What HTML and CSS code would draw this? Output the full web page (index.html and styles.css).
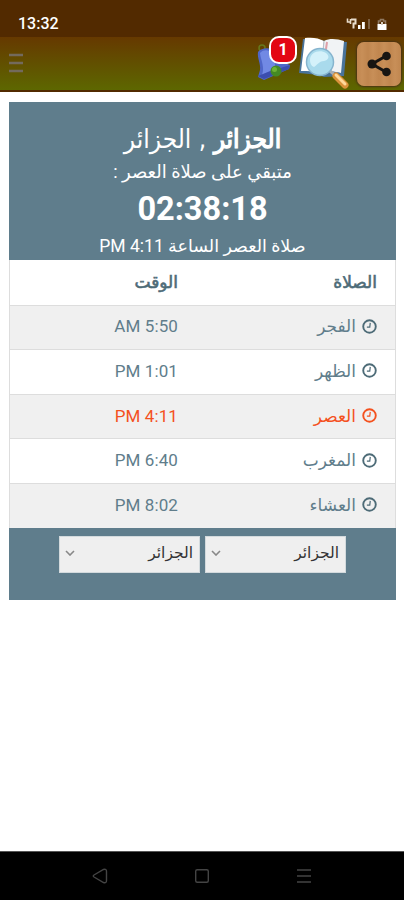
FILE: index.html
```html
<!DOCTYPE html>
<html lang="ar" dir="rtl">
<head>
<meta charset="utf-8">
<title>أوقات الصلاة</title>
<link rel="stylesheet" href="styles.css">
</head>
<body>
<svg width="0" height="0" class="defs">
	<symbol id="clock" viewBox="0 0 16 16">
		<circle cx="8" cy="8" r="6.700" fill="none" stroke="currentColor" stroke-width="2"/>
		<path d="M8.800 4.200L8.300 8.600H5.200" fill="none" stroke="currentColor" stroke-width="1.300"/>
	</symbol>
</svg>

<div class="status" dir="ltr">
	<span class="status-time">13:32</span>
	<svg class="status-icons" width="42" height="16" viewBox="0 0 42 16">
		<path d="M1.500 1.500v3.500h3.500M4.500 2v5" fill="none" stroke="#e8dccb" stroke-width="1.600"/>
		<path d="M5 2.500h4.500v4H7.500v5" fill="none" stroke="#e8dccb" stroke-width="2"/>
		<path d="M12 8h2.500v4H12zM16 5h2.800v7H16z" fill="#fff"/>
		<path d="M22 2h2v10h-2z" fill="#7d6043"/>
		<path d="M32.500 7V4h2V2.500h3V4h2v3" fill="none" stroke="#8f7860" stroke-width="1.600"/>
		<path d="M31.500 7h9v6h-9z" fill="#fff"/>
		<path d="M35 5h2v3h-2z" fill="#d8cdbf"/>
	</svg>
</div>

<div class="topbar" dir="ltr">
	<svg class="menu" width="16" height="20" viewBox="0 0 16 20">
		<path d="M1 2h14M1 10h14M1 18h14" stroke="#736a5c" stroke-width="2.600"/>
	</svg>
	<div class="tools">
		<div class="bell">
			<svg width="36" height="38" viewBox="0 0 36 38">
				<circle cx="6" cy="4" r="3" fill="none" stroke="#66791c" stroke-width="1.500"/>
				<path d="M2 8C6 3 16 3 22 9c5 6 6 10 12 12l-1 4-25 11-6-3 2-7C5 20 1 14 2 8z" fill="#4f66c8"/>
				<path d="M4 9c4-4 9-3 12 0 3 5 2 10 4 15l-14 7c3-8-1-14-2-22z" fill="#7189e4"/>
				<path d="M2 32l6 3 25-10 1-4-22 7z" fill="#3c4eae"/>
				<circle cx="20" cy="27" r="5.500" fill="#458a24"/>
				<circle cx="18.500" cy="25.500" r="2.500" fill="#6fb335"/>
			</svg>
			<span class="badge">1</span>
		</div>
		<svg class="book" width="52" height="54" viewBox="0 0 52 54">
			<path d="M4 2L0 36l20 2 5 2 20-1 3-34-20-1z" fill="#49739a"/>
			<path d="M6 1c7-1 14 0 19 3l-3 32c-6-2-13-2-20-2z" fill="#fff"/>
			<path d="M25 4c6-3 13-2 20 0l-3 32c-7-2-13-2-20 0z" fill="#f1f3f5"/>
			<path d="M25 4l-3 32" stroke="#b8c0c8" stroke-width="1.200"/>
			<path d="M28 5l-2 14" stroke="#dfa0a8" stroke-width="2"/>
			<path d="M31 34l5 4" stroke="#a6aeb4" stroke-width="3"/>
			<path d="M37 39l9 9" stroke="#d9923a" stroke-width="7" stroke-linecap="round"/>
			<path d="M37 38l9 9" stroke="#ffd99a" stroke-width="3" stroke-linecap="round"/>
			<circle cx="21" cy="25" r="13.500" fill="#a9daec" stroke="#86b4ce" stroke-width="1.500"/>
			<path d="M11 23c0-8 10-11 16-7 4 3 3 7-2 8-5 0-8 5-10 6-3-1-4-4-4-7z" fill="#d4f1fa"/>
		</svg>
		<span class="share">
			<svg width="26" height="26" viewBox="0 0 26 26" fill="#181512">
				<path d="M20 5L6 13l14 8" fill="none" stroke="#181512" stroke-width="3"/>
				<circle cx="20.500" cy="5" r="4.300"/>
				<circle cx="6" cy="13" r="4.500"/>
				<circle cx="20.500" cy="21" r="4.300"/>
			</svg>
		</span>
	</div>
</div>

<div class="content">
	<div class="card">
		<div class="card-head">
			<h1 class="city"><b>الجزائر</b> , الجزائر</h1>
			<p class="left">متبقي على صلاة العصر :</p>
			<p class="counter">02:38:18</p>
			<p class="next">صلاة العصر الساعة 4:11 PM</p>
		</div>
		<div class="times">
			<div class="row row-head"><span class="name">الصلاة</span><span class="hour">الوقت</span></div>
			<div class="row"><span class="name"><svg class="clock"><use href="#clock"/></svg>الفجر</span><span class="hour">5:50 AM</span></div>
			<div class="row"><span class="name"><svg class="clock"><use href="#clock"/></svg>الظهر</span><span class="hour">1:01 PM</span></div>
			<div class="row active"><span class="name"><svg class="clock"><use href="#clock"/></svg>العصر</span><span class="hour">4:11 PM</span></div>
			<div class="row"><span class="name"><svg class="clock"><use href="#clock"/></svg>المغرب</span><span class="hour">6:40 PM</span></div>
			<div class="row"><span class="name"><svg class="clock"><use href="#clock"/></svg>العشاء</span><span class="hour">8:02 PM</span></div>
		</div>
		<div class="card-foot">
			<div class="select"><span>الجزائر</span><svg width="10" height="6" viewBox="0 0 10 6"><path d="M1 1l4 4 4-4" fill="none" stroke="#888" stroke-width="1.600"/></svg></div>
			<div class="select"><span>الجزائر</span><svg width="10" height="6" viewBox="0 0 10 6"><path d="M1 1l4 4 4-4" fill="none" stroke="#888" stroke-width="1.600"/></svg></div>
		</div>
	</div>
</div>

<div class="navbar" dir="ltr">
	<svg width="16" height="16" viewBox="0 0 16 16"><path d="M2 7L11.500 1.500q3-1 3 2v9q0 3-3 2L2 9q-1.500-1 0-2z" fill="none" stroke="#444" stroke-width="1.400"/></svg>
	<svg width="16" height="16" viewBox="0 0 16 16"><rect x="1.700" y="1.700" width="12.600" height="12.600" rx="1.500" fill="none" stroke="#444" stroke-width="1.400"/></svg>
	<svg width="16" height="16" viewBox="0 0 16 16"><path d="M1 2h14M1 8h14M1 14h14" stroke="#444" stroke-width="1.700"/></svg>
</div>
</body>
</html>
```
FILE: styles.css
```css
*{box-sizing:border-box;margin:0;padding:0;}
html,body{height:100%;overflow:hidden;}
body{display:flex;flex-direction:column;background:#fff;font-family:Roboto,"DejaVu Sans",sans-serif;}
.defs{position:absolute;}

.status{height:37px;flex:none;display:flex;align-items:flex-start;justify-content:space-between;padding:14px 16px 0 18px;background:#522a00;color:#fff;}
.status-time{font-size:16px;line-height:20px;font-weight:500;}
.status-icons{margin-top:3px;}

.topbar{height:55px;flex:none;display:flex;align-items:flex-start;justify-content:space-between;padding:0 3px 0 8px;
	background:linear-gradient(#663900,#5d6700);border-bottom:2px solid #522a00;}
.menu{margin-top:16px;}
.tools{display:flex;align-items:flex-start;}
.bell{position:relative;width:43px;height:50px;padding-top:7px;}
.badge{position:absolute;left:13px;top:-1px;width:28px;height:28px;border:2px solid #fff;border-radius:10px;background:#e30613;color:#fff;font-size:16px;line-height:24px;font-weight:700;text-align:center;}
.book{margin-right:5px;}
.share{width:44px;height:44px;margin:5px 0 0 1px;display:flex;align-items:center;justify-content:center;border-radius:7px;
	background:repeating-linear-gradient(90deg,#c0864f 0,#c88f58 5px,#c0864f 11px);box-shadow:0 0 2px 1px #4a3215;}

.content{flex:1;padding:10px 8px 0 9px;}
.card{height:498px;display:flex;flex-direction:column;background:#5f7d8c;}
.card-head{height:158px;padding-top:17px;color:#fff;text-align:center;}
.city{height:41px;line-height:41px;font-family:"DejaVu Sans Condensed","DejaVu Sans",sans-serif;font-stretch:condensed;font-size:26px;font-weight:400;}
.city b{font-weight:400;-webkit-text-stroke:1.2px #fff;}
.left{height:27px;line-height:24px;font-size:18px;}
.counter{height:46px;line-height:44px;font-size:32.500px;font-weight:700;}
.next{height:24px;line-height:26px;font-size:17.500px;}

.times{border:1px solid #ddd;border-width:0 1px;background:#fff;color:#607d8b;}
.row{height:44.600px;display:flex;align-items:center;padding:0 18px 2px;font-size:17px;border-top:1px solid #ddd;}
.row:nth-child(even){background:#f0f0f0;}
.row-head{border-top-color:#fff;-webkit-text-stroke:.6px #4d6b77;color:#4d6b77;}
.name{width:199px;display:flex;align-items:center;gap:6px;}
.row .hour{letter-spacing:.1px;}
.clock{width:15px;height:15px;color:#4d6b77;}
.active,.active .clock{color:#f4511e;}

.card-foot{display:flex;justify-content:center;gap:5px;padding:8px 0 0;}
.select{width:141px;height:37px;display:flex;align-items:center;justify-content:space-between;padding:0 6px 2px 5px;background:#efefef;border:1px solid #d3dadd;color:#333;font-size:15.500px;}

.navbar{height:49px;flex:none;display:flex;justify-content:center;gap:86px;padding-top:16px;background:#000;border-top:1px solid #555;}
```
